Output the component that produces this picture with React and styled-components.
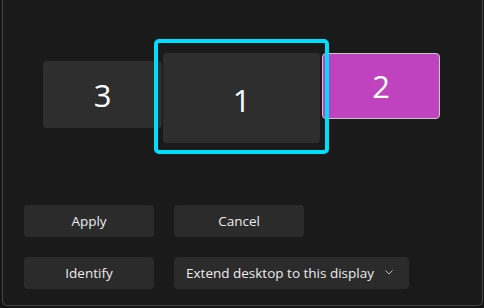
import React from 'react'
import styled, { createGlobalStyle } from 'styled-components'

const GlobalStyle = createGlobalStyle`
  html, body {
    margin: 0;
    padding: 0;
    background: #141414;
    font-family: "Open Sans", "Noto Sans", sans-serif;
  }
`

// positions are page coords; the canvas starts at x=3
const monitors = [
  { id: 3, left: 43, top: 61, width: 119, height: 67, accent: false },
  { id: 1, left: 163, top: 53, width: 157, height: 90, accent: false, textOffset: 3 },
  { id: 2, left: 322, top: 53, width: 118, height: 66, accent: true },
]

const Panel = styled.section`
  box-sizing: border-box;
  margin-left: 2px;
  width: 481px;
  height: 306px;
  background: #1a1a1a;
  border: 1px solid #454545;
  border-top: none;
  border-radius: 0 0 5px 5px;
  display: flex;
  flex-direction: column;
`

const Canvas = styled.div`
  position: relative;
  height: 204px;
`

const Monitor = styled.div`
  position: absolute;
  box-sizing: border-box;
  display: flex;
  align-items: center;
  justify-content: center;
  border-radius: 4px;
  background: ${p => (p.$accent ? '#bf43bf' : '#2e2e2e')};
  border: ${p => (p.$accent ? '1px solid #c9c9c9' : 'none')};
  color: #ffffff;
  font-size: 31px;
  font-weight: 400;
`

const Selection = styled.div`
  position: absolute;
  box-sizing: border-box;
  left: 151px;
  top: 39px;
  width: 175px;
  height: 115px;
  border: 4px solid #00deff;
  border-radius: 5px;
  pointer-events: none;
`

const Controls = styled.div`
  display: flex;
  flex-direction: column;
  gap: 20px;
  padding: 1px 0 0 21px;
`

const Row = styled.div`
  display: flex;
  gap: 20px;
`

const Button = styled.button`
  box-sizing: border-box;
  height: 32px;
  width: ${p => p.$width || 130}px;
  border: none;
  border-radius: 4px;
  background: #2b2b2b;
  color: #ececec;
  font-family: "Open Sans", "Noto Sans", sans-serif;
  font-size: 13.5px;
  display: flex;
  align-items: center;
  justify-content: ${p => (p.$dropdown ? 'space-between' : 'center')};
  padding: ${p => (p.$dropdown ? '0 16px 0 12px' : '0')};
  padding-bottom: 1px;
`

const Chevron = () => (
  <svg width="8" height="5" viewBox="0 0 8 5" fill="none">
    <path d="M0.5 0.5l3.5 3.5L7.5 0.5" stroke="#bdbdbd" strokeWidth="1" />
  </svg>
)

export default function App() {
  return (
    <>
      <GlobalStyle />
      <Panel>
        <Canvas>
          {monitors.map(m => (
            <Monitor
              key={m.id}
              $accent={m.accent}
              style={{ left: m.left - 3, top: m.top, width: m.width, height: m.height, paddingTop: m.textOffset || 0 }}
            >
              {m.id}
            </Monitor>
          ))}
          <Selection />
        </Canvas>
        <Controls>
          <Row>
            <Button>Apply</Button>
            <Button>Cancel</Button>
          </Row>
          <Row>
            <Button>Identify</Button>
            <Button $width={235} $dropdown>
              Extend desktop to this display
              <Chevron />
            </Button>
          </Row>
        </Controls>
      </Panel>
    </>
  )
}
